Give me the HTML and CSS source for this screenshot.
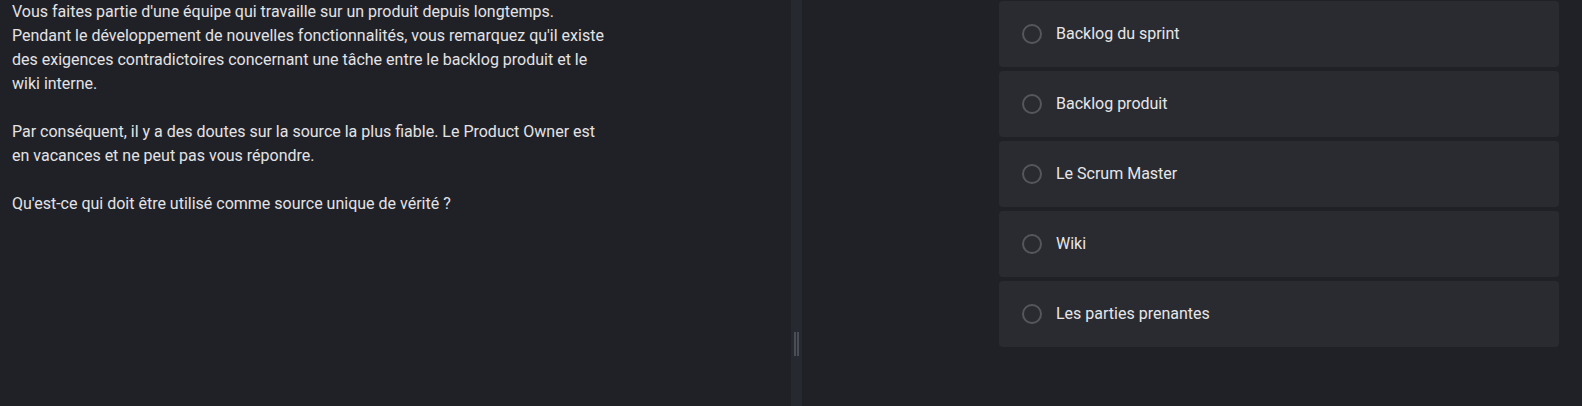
FILE: index.html
```html
<!DOCTYPE html>
<html lang="fr">
<head>
<meta charset="utf-8">
<title>Question</title>
<link rel="stylesheet" href="styles.css">
</head>
<body>
<div class="layout">
  <section class="question">
    <div class="question-text">
      <p>Vous faites partie d'une équipe qui travaille sur un produit depuis longtemps. Pendant le développement de nouvelles fonctionnalités, vous remarquez qu'il existe des exigences contradictoires concernant une tâche entre le backlog produit et le wiki interne.</p>
      <p>Par conséquent, il y a des doutes sur la source la plus fiable. Le Product Owner est en vacances et ne peut pas vous répondre.</p>
      <p>Qu'est-ce qui doit être utilisé comme source unique de vérité ?</p>
    </div>
  </section>
  <div class="divider"><span class="grip"></span></div>
  <section class="answers">
    <ul class="options">
      <li class="option"><span class="radio"></span><span class="label">Backlog du sprint</span></li>
      <li class="option"><span class="radio"></span><span class="label">Backlog produit</span></li>
      <li class="option"><span class="radio"></span><span class="label">Le Scrum Master</span></li>
      <li class="option"><span class="radio"></span><span class="label">Wiki</span></li>
      <li class="option"><span class="radio"></span><span class="label">Les parties prenantes</span></li>
    </ul>
  </section>
</div>
</body>
</html>
```

FILE: styles.css
```css
* { box-sizing: border-box; }
html, body { margin: 0; padding: 0; height: 100%; }
body {
  background: #202126;
  color: #e3e3e6;
  font-family: Roboto, "Noto Sans", sans-serif;
  font-size: 16px;
  line-height: 24px;
  overflow: hidden;
}
.layout {
  display: flex;
  height: 406px;
}
.question {
  width: 791px;
  flex: none;
  padding: 0 12px;
}
.question-text {
  width: 600px;
}
.question-text p {
  margin: 0 0 24px;
}
.divider {
  width: 11px;
  flex: none;
  background: #272930;
  display: flex;
  align-items: flex-end;
  justify-content: center;
  padding-bottom: 50px;
}
.grip {
  width: 5px;
  height: 24px;
  border-left: 2px solid #4a4d56;
  border-right: 2px solid #4a4d56;
}
.answers {
  flex: 1;
  padding: 1px 23px 0 197px;
}
.options {
  list-style: none;
  margin: 0;
  padding: 0;
  display: flex;
  flex-direction: column;
  gap: 4px;
}
.option {
  height: 66px;
  background: #2a2b30;
  border-radius: 4px;
  display: flex;
  align-items: center;
  padding-left: 23px;
  gap: 14px;
}
.radio {
  width: 20px;
  height: 20px;
  border: 2px solid #55575d;
  border-radius: 50%;
  flex: none;
}
.label {
  color: #e6e6e9;
}
```
